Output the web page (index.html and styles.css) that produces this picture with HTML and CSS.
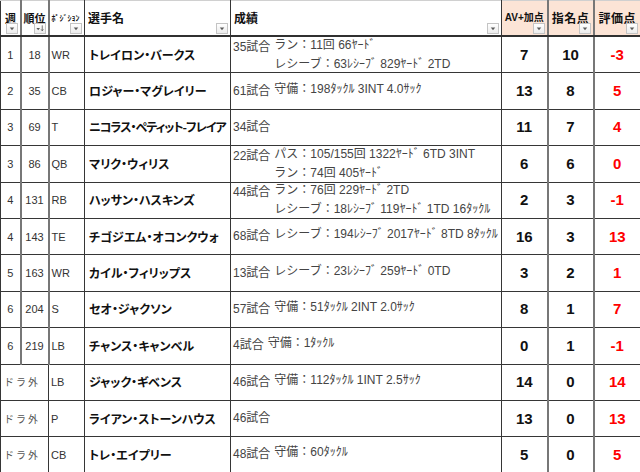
FILE: index.html
```html
<!DOCTYPE html>
<html lang="ja">
<head>
<meta charset="utf-8">
<title>ドラフト評価</title>
<link rel="stylesheet" href="styles.css">
</head>
<body>
<table class="sheet">
  <colgroup>
    <col class="w-week"><col class="w-rank"><col class="w-pos"><col class="w-name"><col class="w-stats"><col class="w-av"><col class="w-pick"><col class="w-eval">
  </colgroup>
  <thead>
    <tr>
      <th class="h-week soft-r">週<span class="flt"><svg viewBox="0 0 11 10"><path d="M3 4h5l-2.5 3z"/></svg></span></th>
      <th class="h-rank soft-r">順位<span class="flt"><svg viewBox="0 0 11 10"><path d="M1.5 4.5h4l-2 2.5z"/><path d="M8 1.5v6M6.8 6l1.2 1.6L9.2 6" class="ln"/></svg></span></th>
      <th class="h-pos">ﾎﾟｼﾞｼｮﾝ<span class="flt"><svg viewBox="0 0 11 10"><path d="M3 4h5l-2.5 3z"/></svg></span></th>
      <th class="h-name">選手名<span class="flt"><svg viewBox="0 0 11 10"><path d="M3 4h5l-2.5 3z"/></svg></span></th>
      <th class="h-stats">成績<span class="flt"><svg viewBox="0 0 11 10"><path d="M3 4h5l-2.5 3z"/></svg></span></th>
      <th class="h-av peach soft-r">AV+加点<span class="flt"><svg viewBox="0 0 11 10"><path d="M3 4h5l-2.5 3z"/></svg></span></th>
      <th class="h-pick peach soft-r">指名点<span class="flt"><svg viewBox="0 0 11 10"><path d="M3 4h5l-2.5 3z"/></svg></span></th>
      <th class="h-eval peach">評価点<span class="flt"><svg viewBox="0 0 11 10"><path d="M3 4h5l-2.5 3z"/></svg></span></th>
    </tr>
  </thead>
  <tbody>
    <tr>
      <td class="week soft-r">1</td><td class="rank soft-r">18</td><td class="pos">WR</td>
      <td class="name">トレイロン・バークス</td>
      <td class="stats"><div class="st"><span class="games">35試合</span><span class="lines"><span>ラン：11回 66ﾔｰﾄﾞ</span><span>レシーブ：63ﾚｼｰﾌﾞ 829ﾔｰﾄﾞ 2TD</span></span></div></td>
      <td class="num soft-r">7</td><td class="num soft-r">10</td><td class="num red">-3</td>
    </tr>
    <tr>
      <td class="week soft-r">2</td><td class="rank soft-r">35</td><td class="pos">CB</td>
      <td class="name">ロジャー・マグレイリー</td>
      <td class="stats"><div class="st"><span class="games">61試合</span><span class="lines"><span>守備：198ﾀｯｸﾙ 3INT 4.0ｻｯｸ</span></span></div></td>
      <td class="num soft-r">13</td><td class="num soft-r">8</td><td class="num red">5</td>
    </tr>
    <tr>
      <td class="week soft-r">3</td><td class="rank soft-r">69</td><td class="pos">T</td>
      <td class="name tight">ニコラス・ペティット-フレイア</td>
      <td class="stats"><div class="st"><span class="games">34試合</span></div></td>
      <td class="num soft-r">11</td><td class="num soft-r">7</td><td class="num red">4</td>
    </tr>
    <tr>
      <td class="week soft-r">3</td><td class="rank soft-r">86</td><td class="pos">QB</td>
      <td class="name">マリク・ウィリス</td>
      <td class="stats"><div class="st"><span class="games">22試合</span><span class="lines"><span>パス：105/155回 1322ﾔｰﾄﾞ 6TD 3INT</span><span>ラン：74回 405ﾔｰﾄﾞ</span></span></div></td>
      <td class="num soft-r">6</td><td class="num soft-r">6</td><td class="num red">0</td>
    </tr>
    <tr>
      <td class="week soft-r">4</td><td class="rank soft-r">131</td><td class="pos">RB</td>
      <td class="name">ハッサン・ハスキンズ</td>
      <td class="stats"><div class="st"><span class="games">44試合</span><span class="lines"><span>ラン：76回 229ﾔｰﾄﾞ 2TD</span><span>レシーブ：18ﾚｼｰﾌﾞ 119ﾔｰﾄﾞ 1TD 16ﾀｯｸﾙ</span></span></div></td>
      <td class="num soft-r">2</td><td class="num soft-r">3</td><td class="num red">-1</td>
    </tr>
    <tr>
      <td class="week soft-r">4</td><td class="rank soft-r">143</td><td class="pos">TE</td>
      <td class="name">チゴジエム・オコンクウォ</td>
      <td class="stats"><div class="st"><span class="games">68試合</span><span class="lines"><span>レシーブ：194ﾚｼｰﾌﾞ 2017ﾔｰﾄﾞ 8TD 8ﾀｯｸﾙ</span></span></div></td>
      <td class="num soft-r">16</td><td class="num soft-r">3</td><td class="num red">13</td>
    </tr>
    <tr>
      <td class="week soft-r">5</td><td class="rank soft-r">163</td><td class="pos">WR</td>
      <td class="name">カイル・フィリップス</td>
      <td class="stats"><div class="st"><span class="games">13試合</span><span class="lines"><span>レシーブ：23ﾚｼｰﾌﾞ 259ﾔｰﾄﾞ 0TD</span></span></div></td>
      <td class="num soft-r">3</td><td class="num soft-r">2</td><td class="num red">1</td>
    </tr>
    <tr>
      <td class="week soft-r">6</td><td class="rank soft-r">204</td><td class="pos">S</td>
      <td class="name">セオ・ジャクソン</td>
      <td class="stats"><div class="st"><span class="games">57試合</span><span class="lines"><span>守備：51ﾀｯｸﾙ 2INT 2.0ｻｯｸ</span></span></div></td>
      <td class="num soft-r">8</td><td class="num soft-r">1</td><td class="num red">7</td>
    </tr>
    <tr>
      <td class="week soft-r">6</td><td class="rank soft-r">219</td><td class="pos">LB</td>
      <td class="name">チャンス・キャンベル</td>
      <td class="stats"><div class="st"><span class="games">4試合</span><span class="lines"><span>守備：1ﾀｯｸﾙ</span></span></div></td>
      <td class="num soft-r">0</td><td class="num soft-r">1</td><td class="num red">-1</td>
    </tr>
    <tr>
      <td class="undrafted" colspan="2">ドラ外</td><td class="pos">LB</td>
      <td class="name">ジャック・ギベンス</td>
      <td class="stats"><div class="st"><span class="games">46試合</span><span class="lines"><span>守備：112ﾀｯｸﾙ 1INT 2.5ｻｯｸ</span></span></div></td>
      <td class="num soft-r">14</td><td class="num soft-r">0</td><td class="num red">14</td>
    </tr>
    <tr>
      <td class="undrafted" colspan="2">ドラ外</td><td class="pos">P</td>
      <td class="name">ライアン・ストーンハウス</td>
      <td class="stats"><div class="st"><span class="games">46試合</span></div></td>
      <td class="num soft-r">13</td><td class="num soft-r">0</td><td class="num red">13</td>
    </tr>
    <tr>
      <td class="undrafted" colspan="2">ドラ外</td><td class="pos">CB</td>
      <td class="name">トレ・エイプリー</td>
      <td class="stats"><div class="st"><span class="games">48試合</span><span class="lines"><span>守備：60ﾀｯｸﾙ</span></span></div></td>
      <td class="num soft-r">5</td><td class="num soft-r">0</td><td class="num red">5</td>
    </tr>
  </tbody>
</table>
</body>
</html>
```
FILE: styles.css
```css
html, body {
  margin: 0;
  padding: 0;
  background: #ffffff;
}
body {
  font-family: "Liberation Sans", "Noto Sans CJK JP", sans-serif;
  color: #333;
}
.sheet {
  border-collapse: collapse;
  table-layout: fixed;
  width: 640px;
}
.w-week { width: 20px; }
.w-rank { width: 28px; }
.w-pos { width: 36px; }
.w-name { width: 146px; }
.w-stats { width: 271px; }
.w-av { width: 46px; }
.w-pick { width: 46px; }
.w-eval { width: 47px; }

.sheet th,
.sheet td {
  border: 1px solid #363636;
  padding: 0;
  overflow: hidden;
  white-space: nowrap;
}
.sheet th.soft-r,
.sheet td.soft-r {
  border-right: 2px solid #777;
}
.sheet th {
  position: relative;
  height: 34px;
  border-top: 1px solid #d0d0d0;
  border-bottom: 2px solid #303030;
  font-family: "Noto Sans CJK JP", sans-serif;
  font-weight: 700;
  font-size: 12px;
  color: #111;
  vertical-align: middle;
  text-align: left;
  background: #fff;
  line-height: 14px;
}
.sheet th.peach { background: #fce4d6; }
.sheet th.h-week { padding-left: 4px; font-size: 11px; }
.sheet th.h-rank { text-align: center; font-size: 11px; }
.sheet th.h-pos { font-size: 8px; padding-left: 2px; }
.sheet th.h-name { padding-left: 3px; }
.sheet th.h-stats { padding-left: 3px; }
.sheet th.h-av { text-align: center; font-size: 10px; font-family: "Liberation Sans", "Noto Sans CJK JP", sans-serif; }
.sheet th.h-pick,
.sheet th.h-eval { text-align: center; font-size: 12px; letter-spacing: 0.5px; }

.flt {
  position: absolute;
  right: 2px;
  bottom: 1px;
  width: 10px;
  height: 9px;
  border: 1px solid #c4c4c4;
  background: linear-gradient(#ffffff, #ececec);
  display: block;
}
.flt svg {
  display: block;
  width: 10px;
  height: 9px;
}
.flt path { fill: #5a5a5a; }
.flt path.ln { fill: none; stroke: #5a5a5a; stroke-width: 0.9; }

.sheet td {
  height: 35.4px;
  vertical-align: middle;
  font-size: 11px;
  line-height: 14px;
}
.week, .rank {
  text-align: center;
  color: #333;
}
.sheet td.pos { padding-left: 2px; color: #333; }
.sheet td.name {
  padding-left: 4px;
  font-family: "Noto Sans CJK JP", sans-serif;
  font-feature-settings: "palt";
  font-weight: 700;
  font-size: 12px;
  letter-spacing: 0;
  color: #111;
}
.sheet td.name.tight { letter-spacing: -1px; }
.sheet td.stats {
  padding-left: 2px;
  color: #444;
  font-size: 12px;
}
.st {
  display: flex;
  align-items: flex-start;
  gap: 4px;
  line-height: 19px;
}
.lines {
  display: flex;
  flex-direction: column;
  margin: -2px 0;
}
.sheet td.num {
  text-align: center;
  font-weight: 700;
  font-size: 15px;
  color: #111;
}
.sheet td.red { color: #ff0000; }
.sheet td.undrafted {
  padding-left: 3px;
  color: #555;
  letter-spacing: 2px;
  font-family: "Noto Sans CJK JP", sans-serif;
  font-size: 10px;
}
```
